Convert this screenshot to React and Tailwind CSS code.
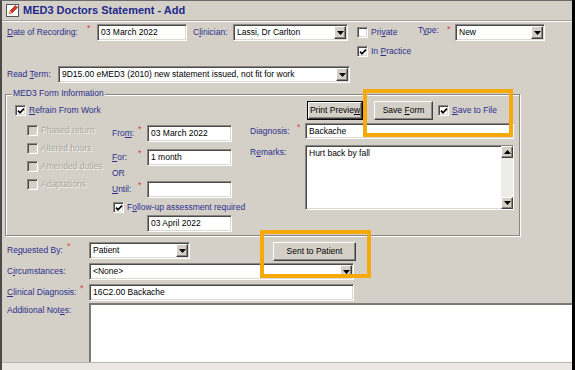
import React from 'react';

const sunken =
  'border border-t-[#8a8782] border-l-[#8a8782] border-b-white border-r-white shadow-[inset_1px_1px_0_#4a4a4a,inset_-1px_-1px_0_#dcd8d2]';
const raised =
  'bg-[#d4d0c8] border border-t-white border-l-white border-b-[#404040] border-r-[#404040] shadow-[inset_-1px_-1px_0_#8a8782]';

function U({ children }) {
  return <span className="underline underline-offset-[1px]">{children}</span>;
}

function Star({ className = '' }) {
  return <span className={`w-[5px] self-start text-[#e0383c] text-[9px] leading-[9px] ${className}`}>*</span>;
}

function Tri({ up }) {
  return (
    <svg width="7" height="4" viewBox="0 0 7 4">
      <path d={up ? 'M0 4h7L3.5 0z' : 'M0 0h7L3.5 4z'} fill="#000" />
    </svg>
  );
}

function Field({ className = '', children }) {
  return (
    <div className={`${sunken} bg-white flex items-center pl-[3px] whitespace-nowrap overflow-hidden text-black ${className}`}>
      {children}
    </div>
  );
}

function Select({ className = '', children }) {
  return (
    <div className={`${sunken} bg-white flex items-stretch text-black ${className}`}>
      <div className="flex-1 flex items-center pl-[3px] whitespace-nowrap overflow-hidden">{children}</div>
      <div className={`${raised} w-[12px] m-[1px] flex items-center justify-center`}>
        <Tri />
      </div>
    </div>
  );
}

function Check({ on, dis }) {
  return (
    <div className={`w-[11px] h-[11px] shrink-0 ${sunken} ${dis ? 'bg-[#d4d0c8]' : 'bg-white'} flex items-center justify-center`}>
      {on && (
        <svg width="8" height="8" viewBox="0 0 8 8">
          <path d="M1 3.6L3 5.8L7 1.6" stroke="#000" strokeWidth="1.7" fill="none" />
        </svg>
      )}
    </div>
  );
}

function Dis({ children }) {
  return (
    <div className="h-[18px] flex items-center">
      <Check dis />
      <span className="ml-[3px] text-[#aaa69f] [text-shadow:1px_1px_0_#f4f2ee]">{children}</span>
    </div>
  );
}

function Scroll() {
  return (
    <div className="w-[12px] flex flex-col bg-[#eeece8]">
      <div className={`${raised} h-[12px] flex items-center justify-center`}>
        <Tri up />
      </div>
      <div className="flex-1" />
      <div className={`${raised} h-[12px] flex items-center justify-center`}>
        <Tri />
      </div>
    </div>
  );
}

function Icon() {
  return (
    <svg width="13" height="13" viewBox="0 0 13 13">
      <rect x="0.5" y="0.5" width="12" height="12" fill="#fff" stroke="#555" />
      <path d="M3 10L4 7L9.5 1.5L11.5 3.5L6 9z" fill="#d8341c" stroke="#7a1a10" strokeWidth="0.6" />
      <path d="M3 10L4 7L6 9z" fill="#f3d28a" />
    </svg>
  );
}

export default function App() {
  const lbl = 'text-[#2c2f8c]';
  return (
    <div className="relative w-[575px] h-[370px] overflow-hidden flex bg-[#d4d0c8] font-['Liberation_Sans',Arial,sans-serif] text-[8.5px] leading-[11px]">
      <div className="flex-1 flex flex-col border-l-[2px] border-l-[#4a4a4a] border-t border-t-[#6a6a6a]">
        {/* title */}
        <div className="h-[20px] flex items-center pl-[4px] border-b border-b-[#a5a19a]">
          <Icon />
          <span className="ml-[4px] text-[11px] font-bold text-[#22288c]">MED3 Doctors Statement - Add</span>
        </div>
        <div className="h-[1px] bg-white" />

        {/* row 1 */}
        <div className="mt-[2px] h-[17px] flex items-stretch">
          <div className={`ml-[5px] w-[90px] flex items-center ${lbl}`}>
            <span><U>D</U>ate of Recording:</span>
            <Star className="ml-auto mr-[5px]" />
          </div>
          <Field className="w-[90px]">03 March 2022</Field>
          <div className={`w-[46px] pl-[6px] flex items-center ${lbl}`}>
            <span>C<U>l</U>inician:</span>
          </div>
          <Select className="w-[115px]">Lassi, Dr Carlton</Select>
          <div className={`w-[70px] pl-[9px] flex items-center ${lbl}`}>
            <Check />
            <span className="ml-[3px]">Pri<U>v</U>ate</span>
          </div>
          <div className={`w-[37px] flex items-start pt-[1px] ${lbl}`}>
            <span>T<U>y</U>pe:</span>
            <Star className="ml-auto mr-[3px]" />
          </div>
          <Select className="w-[90px]">New</Select>
        </div>

        {/* row 2 */}
        <div className={`mt-[5px] h-[11px] flex items-center pl-[355px] ${lbl}`}>
          <Check on />
          <span className="ml-[3px]">In <U>P</U>ractice</span>
        </div>

        {/* read term */}
        <div className="mt-[9px] h-[17px] flex items-stretch">
          <div className={`ml-[5px] w-[51px] flex items-center ${lbl}`}>
            <span>Read <U>T</U>erm:</span>
          </div>
          <Select className="w-[292px]">9D15.00 eMED3 (2010) new statement issued, not fit for work</Select>
        </div>

        {/* group box */}
        <div className="relative mt-[11px] ml-[3px] w-[515px] h-[142px] border border-[#8a8782] shadow-[inset_1px_1px_0_#fff,1px_1px_0_#fff]">
          <span className={`absolute top-[-7px] left-[6px] px-[1px] bg-[#d4d0c8] ${lbl}`}>MED3 Form Information</span>

          <div className="mt-[6px] h-[19px] flex items-center">
            <div className={`w-[301px] pl-[9px] flex items-center ${lbl}`}>
              <Check on />
              <span className="ml-[3px]"><U>R</U>efrain From Work</span>
            </div>
            <div className="w-[56px] h-[19px] border border-black flex">
              <div className={`${raised} flex-1 flex items-center justify-center text-black`}>
                <span>Print Previe<U>w</U></span>
              </div>
            </div>
            <div className={`${raised} ml-[11px] w-[59px] h-[19px] flex items-center justify-center text-black`}>
              <span>Save <U>F</U>orm</span>
            </div>
            <div className="ml-[5px]">
              <Check on />
            </div>
            <span className={`ml-[3px] ${lbl}`}><U>S</U>ave to File</span>
          </div>

          <div className="mt-[3px] flex items-start">
            <div className="w-[106px] pl-[21px] mt-[-2px] flex flex-col">
              <Dis>Phased return</Dis>
              <Dis>Altered hours</Dis>
              <Dis>Amended duties</Dis>
              <Dis>Adaptations</Dis>
            </div>

            <div className="w-[138px] flex flex-col">
              <div className="mt-[2px] h-[17px] flex items-stretch">
                <div className={`w-[35px] flex items-center ${lbl}`}>
                  <span>Fro<U>m</U>:</span>
                  <Star className="ml-auto mr-[4px]" />
                </div>
                <Field className="w-[85px]">03 March 2022</Field>
              </div>
              <div className="mt-[7px] h-[17px] flex items-stretch">
                <div className={`w-[35px] flex items-center ${lbl}`}>
                  <span><U>F</U>or:</span>
                  <Star className="ml-auto mr-[4px]" />
                </div>
                <Field className="w-[85px]">1 month</Field>
              </div>
              <div className={`h-[14px] flex items-center ${lbl}`}>OR</div>
              <div className="mt-[1px] h-[17px] flex items-stretch">
                <div className={`w-[35px] flex items-center ${lbl}`}>
                  <span><U>U</U>ntil:</span>
                  <Star className="ml-auto mr-[4px]" />
                </div>
                <Field className="w-[85px]" />
              </div>
              <div className={`mt-[4px] h-[11px] ml-[1px] flex items-center whitespace-nowrap ${lbl}`}>
                <Check on />
                <span className="ml-[3px]">F<U>o</U>llow-up assessment required</span>
              </div>
              <Field className="mt-[2px] ml-[35px] w-[85px] h-[17px]">03 April 2022</Field>
            </div>

            <div className="flex flex-col">
              <div className="h-[16px] flex items-stretch">
                <div className={`w-[55px] flex items-center ${lbl}`}>
                  <span>Diagnosis:</span>
                  <Star className="ml-auto mr-[3px]" />
                </div>
                <Field className="w-[209px]">Backache</Field>
              </div>
              <div className="mt-[6px] flex items-start">
                <div className={`w-[55px] pt-[2px] ${lbl}`}>
                  <span>R<U>e</U>marks:</span>
                </div>
                <div className={`${sunken} bg-white w-[209px] h-[65px] flex`}>
                  <div className="flex-1 pl-[3px] pt-[2px] text-black">Hurt back by fall</div>
                  <Scroll />
                </div>
              </div>
            </div>
          </div>
        </div>

        {/* lower fields */}
        <div className="mt-[6px] flex items-start">
          <div className={`ml-[5px] w-[82px] h-[17px] flex items-center ${lbl}`}>
            <span>Re<U>q</U>uested By:</span>
            <Star className="ml-auto mr-[17px]" />
          </div>
          <Select className="w-[101px] h-[17px]">Patient</Select>
          <div className={`${raised} ml-[83px] w-[83px] h-[19px] flex items-center justify-center text-black`}>
            Sent to Patient
          </div>
        </div>
        <div className="mt-[2px] h-[17px] flex items-stretch">
          <div className={`ml-[5px] w-[82px] flex items-center ${lbl}`}>
            <span>C<U>i</U>rcumstances:</span>
          </div>
          <Select className="w-[265px]">&lt;None&gt;</Select>
        </div>
        <div className="mt-[4px] h-[17px] flex items-stretch">
          <div className={`ml-[5px] w-[82px] flex items-center ${lbl}`}>
            <span><U>C</U>linical Diagnosis:</span>
            <Star className="ml-auto mr-[4px]" />
          </div>
          <Field className="w-[265px]">16C2.00 Backache</Field>
        </div>
        <div className="mt-[2px] h-[59px] flex items-stretch">
          <div className={`ml-[5px] w-[82px] pt-[2px] ${lbl}`}>
            <span>Additional Not<U>e</U>s:</span>
          </div>
          <div className="flex-1 bg-white border-t-2 border-l-2 border-[#7d7a75]" />
        </div>
        <div className="flex-1 bg-[#ebe8e3] border-t border-t-[#b9b5ae]" />
      </div>
      <div className="w-[3px] bg-black" />

      {/* highlight boxes */}
      <div className="absolute left-[363px] top-[89px] w-[150px] h-[48px] border-[4px] border-[#f6a90a]" />
      <div className="absolute left-[260px] top-[230px] w-[111px] h-[48px] border-[4px] border-[#f6a90a]" />
    </div>
  );
}
